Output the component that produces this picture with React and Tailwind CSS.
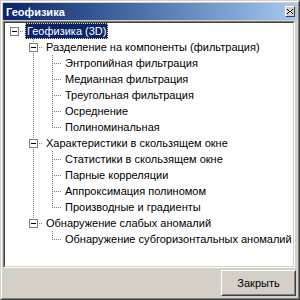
import React from 'react';

const tree = [
  {
    label: 'Геофизика (3D)',
    selected: true,
    children: [
      {
        label: 'Разделение на компоненты (фильтрация)',
        children: [
          { label: 'Энтропийная фильтрация' },
          { label: 'Медианная фильтрация' },
          { label: 'Треугольная фильтрация' },
          { label: 'Осреднение' },
          { label: 'Полиноминальная' },
        ],
      },
      {
        label: 'Характеристики в скользящем окне',
        children: [
          { label: 'Статистики в скользящем окне' },
          { label: 'Парные корреляции' },
          { label: 'Аппроксимация полиномом' },
          { label: 'Производные и градиенты' },
        ],
      },
      {
        label: 'Обнаружение слабых аномалий',
        children: [{ label: 'Обнаружение субгоризонтальных аномалий' }],
      },
    ],
  },
];

// checkerboard dots like the classic treeview
const dot = (x, y) => <rect key={x + '-' + y} x={x} y={y} width="1" height="1" fill="#808080" />;

function Guide({ on }) {
  const dots = [];
  if (on) for (let y = 0; y < 16; y++) if ((9 + y) % 2 === 1) dots.push(dot(9, y));
  return (
    <svg width="19" height="16" className="block shrink-0">
      {dots}
    </svg>
  );
}

function Connector({ up, down, box }) {
  const dots = [];
  if (up) for (let y = 0; y <= 8; y++) if ((9 + y) % 2 === 1) dots.push(dot(9, y));
  if (down) for (let y = 8; y < 16; y++) if ((9 + y) % 2 === 1) dots.push(dot(9, y));
  for (let x = box ? 14 : 10; x < 19; x++) if ((x + 8) % 2 === 1) dots.push(dot(x, 8));
  return (
    <svg width="19" height="16" className="block shrink-0">
      {dots}
      {box && (
        <g>
          <rect x="5.5" y="4.5" width="8" height="8" fill="#fff" stroke="#808080" shapeRendering="crispEdges" />
          <rect x="7" y="8" width="5" height="1" fill="#000" />
        </g>
      )}
    </svg>
  );
}

function flatten(nodes, depth, guides, rows, isRoot) {
  nodes.forEach((n, i) => {
    const last = i === nodes.length - 1;
    rows.push({
      ...n,
      guides,
      up: !isRoot || i > 0,
      down: !last,
      box: !!n.children,
    });
    if (n.children) flatten(n.children, depth + 1, [...guides, !last], rows, false);
  });
  return rows;
}

export default function App() {
  const rows = flatten(tree, 0, [], [], true);

  return (
    <div className="w-[300px] h-[300px] border border-t-[#D4D0C8] border-l-[#D4D0C8] border-r-[#404040] border-b-[#404040] font-['Liberation_Sans',Arial,sans-serif] text-[11px] text-black">
      <div className="w-full h-full border border-t-white border-l-white border-r-[#808080] border-b-[#808080] bg-[#D4D0C8] p-[1px] flex flex-col">
        {/* caption */}
        <div className="h-[17px] shrink-0 flex items-center justify-between bg-gradient-to-r from-[#0A246A] to-[#A6CAF0] pl-[3px] pr-[2px]">
          <span className="text-white font-bold text-[11px] leading-none pt-[2px]">Геофизика</span>
          <div className="w-[10px] h-[11px] bg-[#D4D0C8] border border-t-white border-l-white border-r-[#404040] border-b-[#404040] flex items-center justify-center">
            <svg width="6" height="5" className="block">
              <path d="M0 0h1v1H0zM5 0h1v1H5zM1 1h1v1H1zM4 1h1v1H4zM2 2h2v1H2zM1 3h1v1H1zM4 3h1v1H4zM0 4h1v1H0zM5 4h1v1H5z" fill="#000" />
            </svg>
          </div>
        </div>

        {/* tree */}
        <div className="mt-[1px] mr-[2px] h-[247px] shrink-0 border border-t-[#808080] border-l-[#808080] border-r-white border-b-white">
          <div className="h-full border border-t-[#404040] border-l-[#404040] border-r-[#D4D0C8] border-b-[#D4D0C8] bg-white overflow-hidden">
            {rows.map((r, i) => (
              <div key={i} className="flex h-4 items-center whitespace-nowrap">
                {r.guides.map((g, j) => (
                  <Guide key={j} on={g} />
                ))}
                <Connector up={r.up} down={r.down} box={r.box} />
                {r.selected ? (
                  <span className="ml-[1px] h-4 leading-[14px] px-[1px] bg-[#0A246A] text-white border border-dotted border-[#F5DB95]">
                    {r.label}
                  </span>
                ) : (
                  <span className="ml-[1px] h-4 leading-4 px-[2px]">{r.label}</span>
                )}
              </div>
            ))}
          </div>
        </div>

        {/* footer */}
        <div className="flex-1 flex justify-end items-start pt-[2px] pr-[1px]">
          <button className="w-[75px] h-[26px] bg-[#D4D0C8] border border-t-white border-l-white border-r-[#404040] border-b-[#404040]">
            <div className="h-full border border-t-[#D4D0C8] border-l-[#D4D0C8] border-r-[#808080] border-b-[#808080] flex items-center justify-center">
              Закрыть
            </div>
          </button>
        </div>
      </div>
    </div>
  );
}
